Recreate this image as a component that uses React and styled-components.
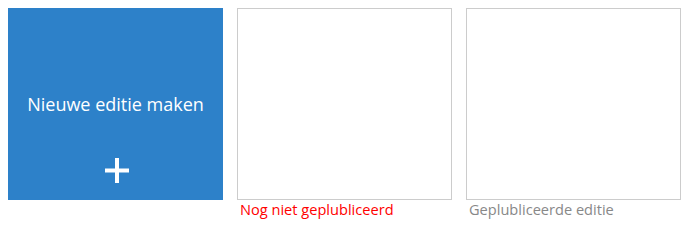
import React from 'react';
import styled, { createGlobalStyle } from 'styled-components';

const GlobalStyle = createGlobalStyle`
    html, body {
        margin: 0;
        padding: 0;
        background: #fff;
    }
    body {
        font-family: "Open Sans", "DejaVu Sans", sans-serif;
    }
`;

const Editions = styled.div`
    display: flex;
    gap: 14px;
    padding: 8px;
`;

const Tile = styled.div`
    display: flex;
    flex-direction: column;
    width: 215px;
`;

const NewEdition = styled.button`
    display: flex;
    flex-direction: column;
    align-items: center;
    box-sizing: border-box;
    width: 215px;
    height: 192px;
    padding: 84px 0 0;
    border: none;
    background: #2d81c9;
    color: #fff;
    font-family: inherit;
    cursor: pointer;
`;

const NewTitle = styled.span`
    font-size: 18px;
    line-height: 24px;
`;

const PlusIcon = styled.svg`
    margin-top: 42px;
    margin-left: 2px;
`;

const Preview = styled.div`
    box-sizing: border-box;
    height: 192px;
    border: 1px solid #cccccc;
    background: #fff;
`;

const Status = styled.span`
    padding-left: 3px;
    font-size: 14.6px;
    line-height: 19px;
    color: ${props => props.$published ? '#888888' : '#ff0000'};
`;

const Plus = () => (
    <PlusIcon width='24' height='25' viewBox='0 0 24 25'>
        <rect x='10' y='0' width='4' height='25' fill='#fff' />
        <rect x='0' y='10.5' width='24' height='4' fill='#fff' />
    </PlusIcon>
);

const EDITIONS = [
    { key: 'draft', label: 'Nog niet geplubliceerd', published: false },
    { key: 'live', label: 'Geplubliceerde editie', published: true }
];

export default function App() {
    return (
        <>
            <GlobalStyle />
            <Editions>
                <Tile>
                    <NewEdition>
                        <NewTitle>Nieuwe editie maken</NewTitle>
                        <Plus />
                    </NewEdition>
                </Tile>
                {EDITIONS.map(edition => (
                    <Tile key={edition.key}>
                        <Preview />
                        <Status $published={edition.published}>{edition.label}</Status>
                    </Tile>
                ))}
            </Editions>
        </>
    );
}
